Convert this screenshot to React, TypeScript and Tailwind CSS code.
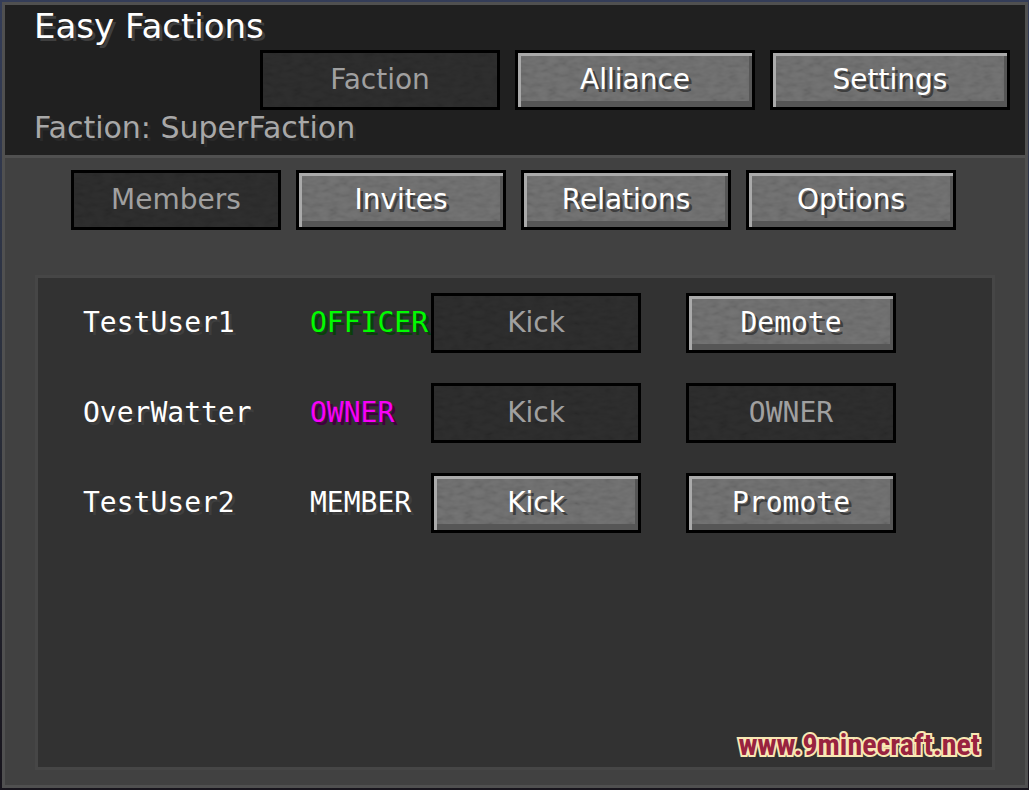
import React, { useState } from "react";
import clsx from "clsx";

type GameButtonProp = {
  label: string;
  className?: string;
  disabled?: boolean;
  onClick?: () => void;
};

type Member = {
  name: string;
  role: string;
  roleStyle: string;
  canKick: boolean;
  action: string;
  canAct: boolean;
};

const MAIN_TABS = ["Faction", "Alliance", "Settings"];
const SUB_TABS = ["Members", "Invites", "Relations", "Options"];

const MEMBERS: Member[] = [
  {
    name: "TestUser1",
    role: "OFFICER",
    roleStyle: "text-[#00fc00] [text-shadow:3px_3px_#0a3f0a]",
    canKick: false,
    action: "Demote",
    canAct: true,
  },
  {
    name: "OverWatter",
    role: "OWNER",
    roleStyle: "text-[#f800f8] [text-shadow:3px_3px_#3f003f]",
    canKick: false,
    action: "OWNER",
    canAct: false,
  },
  {
    name: "TestUser2",
    role: "MEMBER",
    roleStyle: "text-white [text-shadow:3px_3px_#3f3f3f]",
    canKick: true,
    action: "Promote",
    canAct: true,
  },
];

// Shared stone grain, drawn behind every button label
function StoneTexture({ faint }: { faint?: boolean }) {
  return (
    <svg
      className={clsx(
        "absolute inset-0 w-full h-full",
        faint ? "opacity-3" : "opacity-8"
      )}
      aria-hidden="true"
    >
      <filter id="stone" x="0" y="0" width="100%" height="100%">
        <feTurbulence
          type="fractalNoise"
          baseFrequency="0.1 0.2"
          numOctaves="2"
          seed="4"
        />
        <feColorMatrix
          values="1.4 0 0 0 -0.2
                  1.4 0 0 0 -0.2
                  1.4 0 0 0 -0.2
                  0 0 0 0 1"
        />
      </filter>
      <rect width="100%" height="100%" filter="url(#stone)" />
    </svg>
  );
}

function GameButton({ label, className, disabled, onClick }: GameButtonProp) {
  return (
    <button
      type="button"
      disabled={disabled}
      onClick={onClick}
      className={clsx(
        "relative h-[60px] border-[3px] border-black overflow-hidden",
        disabled ? "bg-[#282828] text-[#a0a0a0]" : "bg-[#696969] text-white",
        className
      )}
    >
      <StoneTexture faint={disabled} />
      <span
        className={clsx(
          "relative flex items-center justify-center h-full pb-px",
          !disabled &&
            "shadow-[inset_3px_3px_#aaaaaa,inset_-3px_-6px_#565656] [text-shadow:3px_3px_#3e3e3e]"
        )}
      >
        {label}
      </span>
    </button>
  );
}

function App() {
  const [mainTab, setMainTab] = useState("Faction");
  const [subTab, setSubTab] = useState("Members");

  return (
    <div className="flex min-h-screen pt-[2px] pb-[2px] pl-[2px] pr-px bg-linear-to-b from-[#343d58] via-[#2b303c] to-[#17141c] font-['DejaVu_Sans',sans-serif] text-[28px] leading-[36px]">
      <div className="flex flex-col flex-1 border-[3px] border-[#505050] bg-[#414141]">
        {/* Header */}
        <header className="border-b-[3px] border-[#505050] bg-[#202020]">
          <h1 className="h-[45px] pl-[29px] text-[34px] leading-[42px] text-white [text-shadow:3px_3px_#3f3f3f]">
            Easy Factions
          </h1>
          <nav className="flex justify-end gap-[15px] pr-[15px]">
            {MAIN_TABS.map((tab) => (
              <GameButton
                key={tab}
                label={tab}
                className="w-[240px]"
                disabled={tab === mainTab}
                onClick={() => setMainTab(tab)}
              />
            ))}
          </nav>
          <p className="h-[45px] pl-[29px] text-[30px] text-[#a8a8a8] [text-shadow:3px_3px_#2a2a2a]">
            Faction: SuperFaction
          </p>
        </header>

        {/* Sub tabs */}
        <nav className="flex justify-center gap-[15px] pt-3 pr-[3px]">
          {SUB_TABS.map((tab) => (
            <GameButton
              key={tab}
              label={tab}
              className="w-[210px]"
              disabled={tab === subTab}
              onClick={() => setSubTab(tab)}
            />
          ))}
        </nav>

        {/* Member list */}
        <main className="flex flex-col flex-1 mt-[45px] mx-[30px] mb-[15px] border-[3px] border-[#464646] bg-[#323232]">
          <div className="pl-[45px]">
            <table className="w-full table-fixed font-['DejaVu_Sans_Mono',monospace]">
              <colgroup>
                <col className="w-[227px]" />
                <col className="w-[121px]" />
                <col className="w-[255px]" />
                <col />
              </colgroup>
              <tbody>
                {MEMBERS.map((member) => (
                  <tr key={member.name} className="h-[90px]">
                    <th
                      scope="row"
                      className="p-0 pb-px text-left font-normal text-white [text-shadow:3px_3px_#3e3e3e]"
                    >
                      {member.name}
                    </th>
                    <td className={clsx("p-0 pb-px", member.roleStyle)}>
                      {member.role}
                    </td>
                    <td className="p-0">
                      <GameButton
                        label="Kick"
                        className="block w-[210px] font-['DejaVu_Sans',sans-serif]"
                        disabled={!member.canKick}
                      />
                    </td>
                    <td className="p-0">
                      <GameButton
                        label={member.action}
                        className="block w-[210px]"
                        disabled={!member.canAct}
                      />
                    </td>
                  </tr>
                ))}
              </tbody>
            </table>
          </div>
          <a
            href="#"
            className="self-end mt-auto mr-3 mb-1 font-['Roboto_Condensed','Liberation_Sans',sans-serif] font-bold text-[30px] text-[#98233f] [-webkit-text-stroke:4px_#f8e8b4] [paint-order:stroke]"
          >
            www.9minecraft.net
          </a>
        </main>
      </div>
    </div>
  );
}

export default App;
